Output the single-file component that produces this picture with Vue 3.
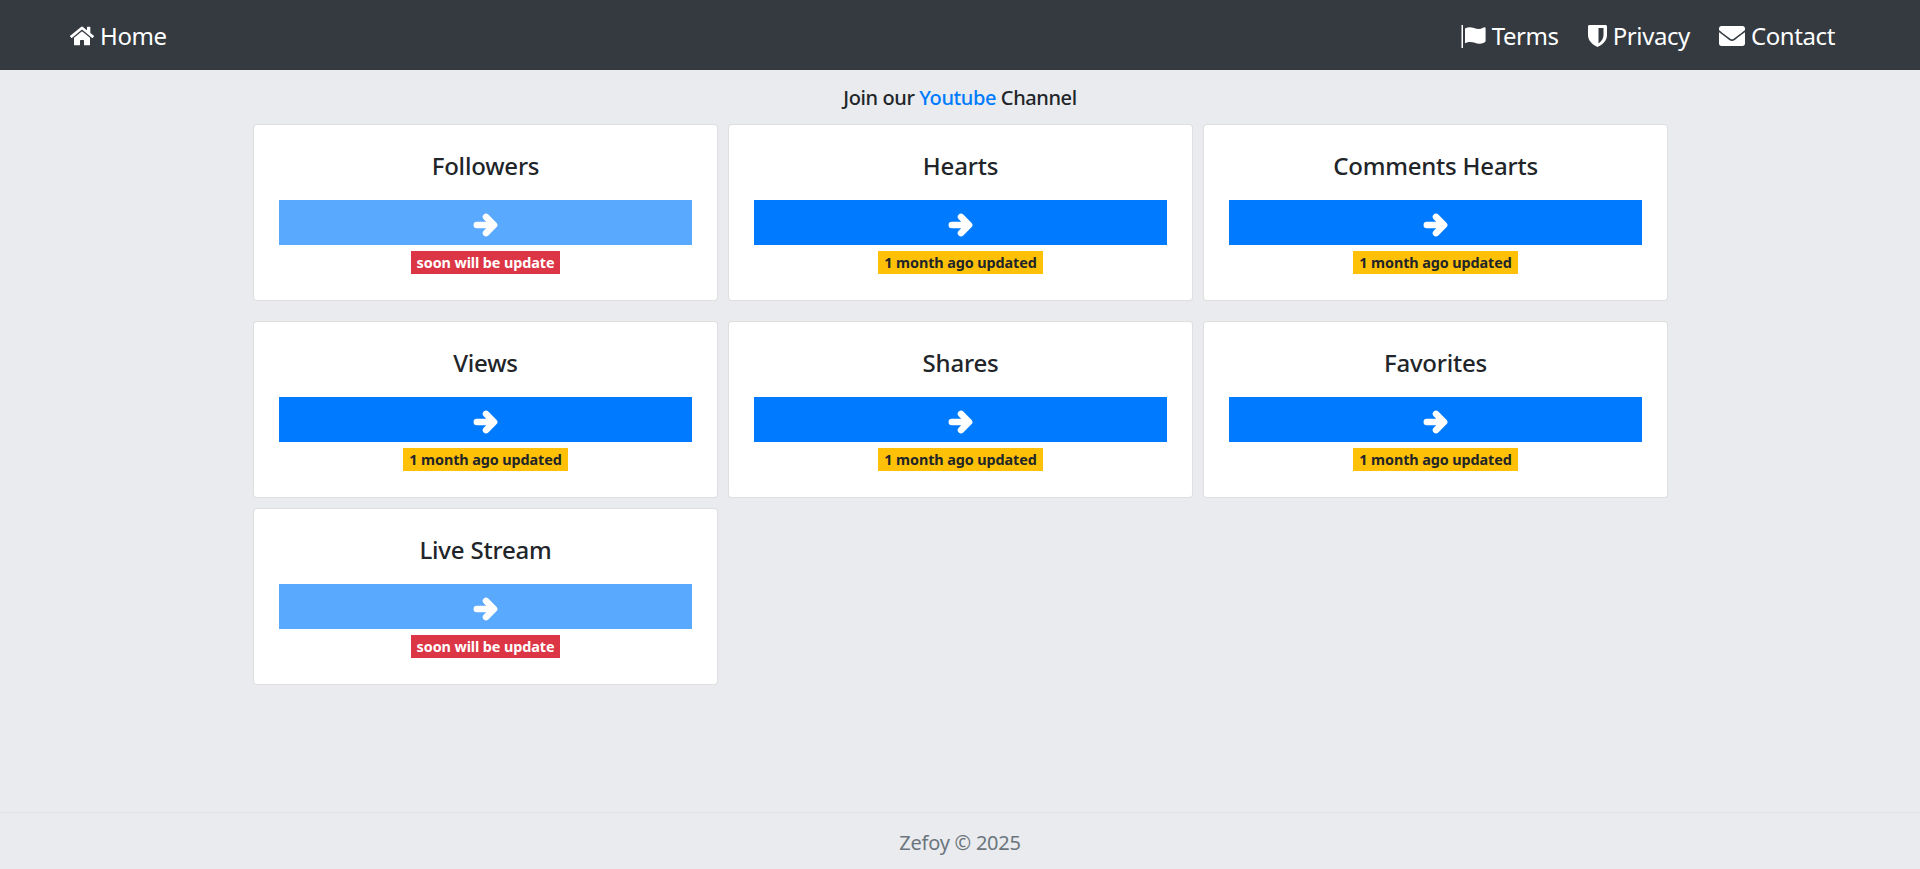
<script setup>
const rows = [
  [
    { title: 'Followers', soon: true },
    { title: 'Hearts', soon: false },
    { title: 'Comments Hearts', soon: false },
  ],
  [
    { title: 'Views', soon: false },
    { title: 'Shares', soon: false },
    { title: 'Favorites', soon: false },
  ],
  [{ title: 'Live Stream', soon: true }],
]
</script>

<template>
  <div class="page">
    <nav class="nav">
      <a class="link">
        <svg class="ico home" viewBox="0 0 576 512"><path d="M280.37 148.26L96 300.11V464a16 16 0 0 0 16 16l112.06-.29a16 16 0 0 0 15.92-16V368a16 16 0 0 1 16-16h64a16 16 0 0 1 16 16v95.64a16 16 0 0 0 16 16.05L464 480a16 16 0 0 0 16-16V300L295.67 148.26a12.19 12.19 0 0 0-15.3 0zM571.6 251.47L488 182.56V44.05a12 12 0 0 0-12-12h-56a12 12 0 0 0-12 12v72.61L318.47 43a48 48 0 0 0-61 0L4.34 251.47a12 12 0 0 0-1.6 16.9l25.5 31A12 12 0 0 0 45.15 301l235.22-193.74a12.19 12.19 0 0 1 15.3 0L530.9 301a12 12 0 0 0 16.9-1.6l25.5-31a12 12 0 0 0-1.7-16.93z"/></svg>
        Home
      </a>
      <div class="right">
        <a class="link">
          <svg class="ico flag" viewBox="0 0 25 23"><path d="M.5 0h1.500v23H.5zM4 3.400c3-1.500 6-1.500 9-.4 3 1.100 6 1.700 9-.2 1.300-.8 2.600-.9 2.600.7v12.200c0 .8-.5 1.300-1.200 1.700-3.400 1.700-6.400 1.700-9.600.4-3-1.100-6-1.500-9.800.4z"/></svg>
          Terms
        </a>
        <a class="link">
          <svg class="ico shield" viewBox="0 0 19 22"><path fill-rule="evenodd" d="M1.500 0h16c.8 0 1.500.7 1.500 1.500V10c0 5.500-4.500 9.800-9.500 12C4.500 19.800 0 15.500 0 10V1.500C0 .7.7 0 1.500 0zM10.500 3v15.500c3-2 5-5 5-8.500V3z"/></svg>
          Privacy
        </a>
        <a class="link">
          <svg class="ico mail" viewBox="0 64 512 384" preserveAspectRatio="none"><path d="M502.3 190.8c3.9-3.1 9.7-.2 9.7 4.7V400c0 26.5-21.5 48-48 48H48c-26.5 0-48-21.5-48-48V195.6c0-5 5.7-7.8 9.7-4.7 22.4 17.4 52.1 39.5 154.1 113.6 21.1 15.4 56.7 47.8 92.2 47.6 35.7.3 72-32.8 92.3-47.6 102-74.1 131.6-96.3 154-113.7zM256 320c23.2.4 56.6-29.2 73.4-41.4 132.7-96.3 142.8-104.7 173.4-128.7 5.8-4.5 9.2-11.5 9.2-18.9v-19c0-26.5-21.5-48-48-48H48C21.5 64 0 85.5 0 112v19c0 7.4 3.4 14.3 9.2 18.9 30.6 23.9 40.7 32.4 173.4 128.7 16.8 12.2 50.2 41.8 73.4 41.4z"/></svg>
          Contact
        </a>
      </div>
    </nav>

    <main class="main">
      <p class="join">Join our <a class="yt">Youtube</a> Channel</p>
      <div v-for="(row, i) in rows" :key="i" class="row" :class="{ first: i === 0 }">
        <section v-for="card in row" :key="card.title" class="card">
          <h5 class="title">{{ card.title }}</h5>
          <button class="btn" :class="{ off: card.soon }" type="button">
            <svg class="arrow" viewBox="0 0 24 24"><path d="M3.500 12H19M12 4.500L19.500 12L12 19.500"/></svg>
          </button>
          <span class="badge" :class="card.soon ? 'red' : 'amber'">{{ card.soon ? 'soon will be update' : '1 month ago updated' }}</span>
        </section>
      </div>
    </main>

    <footer class="foot">Zefoy © 2025</footer>
  </div>
</template>

<style>
html, body { margin: 0; background: #e9ebee; }
</style>

<style scoped>
.page {
  height: 869px;
  display: flex;
  flex-direction: column;
  font-family: "Noto Sans", "Open Sans", sans-serif;
  color: #212529;
  background: #e9ebee;
}
.nav {
  height: 70px;
  flex: none;
  background: #343a40;
  display: flex;
  align-items: center;
  justify-content: space-between;
  padding: 2px 85px 0 70px;
  box-sizing: border-box;
}
.right { display: flex; gap: 29px; }
.link {
  color: #fff;
  font-size: 24px;
  letter-spacing: -0.4px;
  line-height: 36px;
  display: flex;
  align-items: center;
  gap: 6px;
}
.ico { fill: #fff; display: block; }
.home { width: 24px; height: 22px; }
.flag { width: 25px; height: 23px; }
.shield { width: 19px; height: 22px; }
.mail { width: 26px; height: 20px; }
.main { flex: 1; display: flex; flex-direction: column; align-items: center; }
.join {
  margin: 0;
  height: 54px;
  padding-top: 15px;
  box-sizing: border-box;
  font-size: 20px;
  font-weight: 500;
  line-height: 26px;
  letter-spacing: -0.4px;
}
.yt { color: #007bff; }
.row {
  width: 1415px;
  margin-left: 1px;
  display: grid;
  grid-template-columns: repeat(3, 465px);
  gap: 10px;
  margin-bottom: 10px;
}
.row.first { margin-bottom: 20px; }
.card {
  height: 177px;
  box-sizing: border-box;
  background: #fff;
  border: 1px solid rgba(0, 0, 0, .125);
  border-radius: 4px;
  padding: 23px 25px 0;
  display: flex;
  flex-direction: column;
  align-items: center;
}
.title {
  margin: 0 0 16px;
  font-size: 24px;
  font-weight: 500;
  line-height: 36px;
  letter-spacing: -0.2px;
}
.btn {
  width: 100%;
  height: 45px;
  flex: none;
  border: 0;
  padding: 5px 0 0;
  background: #007bff;
  display: flex;
  align-items: center;
  justify-content: center;
}
.btn.off { background: #59a9ff; }
.arrow {
  width: 26px;
  height: 26px;
  fill: none;
  stroke: #fff;
  stroke-width: 6;
  stroke-linecap: round;
  stroke-linejoin: round;
}
.badge {
  margin-top: 6px;
  height: 23px;
  padding: 0 6px;
  font-size: 14.4px;
  font-weight: 700;
  line-height: 23px;
  letter-spacing: -0.1px;
}
.red { background: #dc3545; color: #fff; }
.amber { background: #ffc107; color: #212529; }
.foot {
  height: 57px;
  flex: none;
  box-sizing: border-box;
  border-top: 1px solid #dfe1e4;
  text-align: center;
  font-size: 20px;
  line-height: 60px;
  letter-spacing: -0.25px;
  color: #6c757d;
}
</style>
